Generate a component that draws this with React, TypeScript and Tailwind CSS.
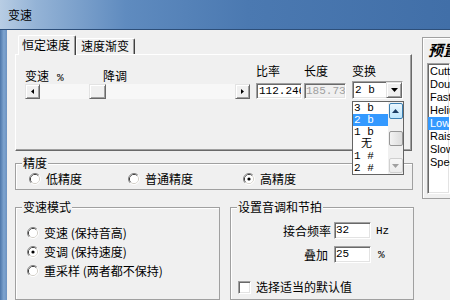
import React from 'react';

const sunken =
  'border border-t-[#a0a0a0] border-l-[#a0a0a0] border-r-white border-b-white shadow-[inset_1px_1px_0_#696969,inset_-1px_-1px_0_#e3e3e3]';
const raised =
  'border border-t-[#e3e3e3] border-l-[#e3e3e3] border-r-[#696969] border-b-[#696969] shadow-[inset_1px_1px_0_#fff,inset_-1px_-1px_0_#a0a0a0] bg-[#f0f0f0]';
const mono = "font-['Liberation_Mono','Noto_Sans_CJK_SC',monospace]";

type Dir = 'left' | 'right' | 'up' | 'down';

const Arrow: React.FC<{ dir: Dir; color?: string }> = ({ dir, color = '#000' }) => {
  if (dir === 'left')
    return (
      <svg width="3" height="5" viewBox="0 0 3 5">
        <polygon points="3,0 0,2.5 3,5" fill={color} />
      </svg>
    );
  if (dir === 'right')
    return (
      <svg width="3" height="5" viewBox="0 0 3 5">
        <polygon points="0,0 3,2.5 0,5" fill={color} />
      </svg>
    );
  if (dir === 'up')
    return (
      <svg width="7" height="4" viewBox="0 0 7 4">
        <polygon points="0,4 3.5,0 7,4" fill={color} />
      </svg>
    );
  return (
    <svg width="7" height="4" viewBox="0 0 7 4">
      <polygon points="0,0 7,0 3.5,4" fill={color} />
    </svg>
  );
};

const Radio: React.FC<{ checked?: boolean }> = ({ checked }) => (
  <svg width="12" height="12" viewBox="0 0 12 12" className="shrink-0">
    <path d="M2.11 9.89 A5.5 5.5 0 0 1 9.89 2.11" stroke="#808080" fill="none" />
    <path d="M9.89 2.11 A5.5 5.5 0 0 1 2.11 9.89" stroke="#ffffff" fill="none" />
    <path d="M2.82 9.18 A4.5 4.5 0 0 1 9.18 2.82" stroke="#404040" fill="none" />
    <path d="M9.18 2.82 A4.5 4.5 0 0 1 2.82 9.18" stroke="#d4d0c8" fill="none" />
    <circle cx="6" cy="6" r="4" fill="#fff" />
    {checked && <circle cx="6" cy="6" r="1.6" fill="#000" />}
  </svg>
);

const RadioItem: React.FC<{ label: string; checked?: boolean; className?: string }> = ({
  label,
  checked,
  className = '',
}) => (
  <div className={`flex items-center ${className}`}>
    <Radio checked={checked} />
    <span className="ml-[5px] whitespace-nowrap">{label}</span>
  </div>
);

const presets = ['Cutter', 'Double', 'Faster', 'Helium', 'Lower', 'Raise', 'Slower', 'Speed'];

const SpeedTab: React.FC = () => (
  <div className="flex items-start pl-[9px]">
    {/* scroll slider */}
    <div className="w-[225px] mt-[14px]">
      <div className="flex h-[14px]">
        <span className="w-[78px] whitespace-nowrap">
          变速<span className={`${mono} text-[11px] ml-[8px]`}>%</span>
        </span>
        <span>降调</span>
      </div>
      <div className="mt-[1px] flex h-[15px]">
        <div className={`${raised} w-[15px] flex items-center justify-center`}>
          <Arrow dir="left" />
        </div>
        <div className="flex-1 bg-[#f7f7f7] flex">
          <div className={`${raised} ml-[49px] w-[17px]`} />
        </div>
        <div className={`${raised} w-[15px] flex items-center justify-center`}>
          <Arrow dir="right" />
        </div>
      </div>
    </div>

    <div className="ml-[6px] w-[46px] mt-[9px]">
      <div>比率</div>
      <div className={`${sunken} mt-[5px] h-[16px] bg-white overflow-hidden pl-[2px] ${mono} text-[11px] leading-[14px] whitespace-nowrap`}>
        112.246
      </div>
    </div>

    <div className="ml-[2px] w-[42px] mt-[9px]">
      <div>长度</div>
      <div className={`${sunken} mt-[5px] h-[16px] bg-[#f0f0f0] overflow-hidden pl-[1px] ${mono} text-[11px] leading-[14px] text-[#a0a0a0] whitespace-nowrap`}>
        185.73
      </div>
    </div>

    <div className="ml-[6px] w-[51px] mt-[9px]">
      <div>变换</div>
      <div className={`${sunken} relative mt-[3px] h-[18px] bg-white flex`}>
        <span className={`${mono} text-[11px] leading-[16px] pl-[2px] flex-1`}>2 b</span>
        <div className={`${raised} w-[16px] flex items-center justify-center`}>
          <Arrow dir="down" />
        </div>
        {/* open dropdown list */}
        <div className="absolute left-[-1px] top-[19px] w-[52px] h-[74px] z-20 bg-white border border-[#646464] flex">
          <div className={`${mono} text-[11px] leading-[12px] flex-1`}>
            <div className="h-[12px] pl-[1px]">3 b</div>
            <div className="h-[12px] pl-[1px] bg-[#3399ff] text-white">2 b</div>
            <div className="h-[12px] pl-[1px]">1 b</div>
            <div className="h-[12px] pl-[8px]">无</div>
            <div className="h-[12px] pl-[1px]">1 #</div>
            <div className="h-[12px] pl-[1px]">2 #</div>
          </div>
          <div className="w-[15px] bg-[#f0f0f0] flex flex-col items-center pt-[1px]">
            <div className="w-[14px] h-[16px] rounded-[2px] border border-[#3c7fb1] bg-[linear-gradient(#eaf6fd,#bee6fd)] flex items-center justify-center">
              <Arrow dir="up" color="#1c3d64" />
            </div>
            <div className="mt-[12px] w-[14px] h-[15px] rounded-[2px] border border-[#979797] bg-[linear-gradient(90deg,#f3f3f3,#dcdcdc)]" />
            <div className="mt-[12px] w-[14px] h-[15px] rounded-[2px] border border-[#d0d0d0] bg-[linear-gradient(#f7f7f7,#ececec)] flex items-center justify-center">
              <Arrow dir="down" color="#a0a0a0" />
            </div>
          </div>
        </div>
      </div>
    </div>
  </div>
);

const Group: React.FC<{ title: string; className?: string; children: React.ReactNode }> = ({
  title,
  className = '',
  children,
}) => (
  <fieldset className={`border border-[#a0a0a0] shadow-[inset_1px_1px_0_#fff] ${className}`}>
    <legend className="ml-[6px] px-[1px] bg-[#f0f0f0] leading-[14px]">{title}</legend>
    {children}
  </fieldset>
);

export default function App() {
  return (
    <div className="w-[450px] h-[300px] overflow-hidden flex flex-col bg-[#f0f0f0] font-['Noto_Sans_CJK_SC',sans-serif] text-[12px] leading-[14px] text-black">
      {/* title bar */}
      <div className="h-[30px] shrink-0 flex items-center pl-[8px] border-b border-[#2d4f7a] bg-[linear-gradient(90deg,#b8cde4_0%,#94b3d6_8%,#5f8bbf_28%,#4b79b1_55%,#416fa8_100%)]">
        <span>变速</span>
      </div>

      <div className="flex flex-1 min-h-0">
        <div className="w-[7px] shrink-0 bg-[linear-gradient(90deg,#4d76a9,#7ea4cf_55%,#6c92c1)]" />

        <div className="flex flex-1 min-w-0">
          {/* left column */}
          <div className="w-[407px] shrink-0 pl-[8px] flex flex-col">
            {/* tabs */}
            <div className="mt-[5px] flex items-end h-[19px]">
              <div className="relative z-10 ml-[3px] w-[58px] h-[20px] -mb-[1px] rounded-t-[2px] bg-[#f0f0f0] border-l border-t border-r border-l-white border-t-white border-r-[#404040] shadow-[inset_-1px_0_0_#a0a0a0] pl-[3px] pt-[2px] whitespace-nowrap">
                恒定速度
              </div>
              <div className="w-[59px] h-[16px] rounded-t-[2px] bg-[#f0f0f0] border-l border-t border-r border-l-white border-t-white border-r-[#404040] shadow-[inset_-1px_0_0_#a0a0a0] pl-[4px] whitespace-nowrap">
                速度渐变
              </div>
            </div>
            <div className="w-[397px] h-[104px] border border-t-white border-l-white border-r-[#696969] border-b-[#696969] shadow-[inset_-1px_-1px_0_#a0a0a0]">
              <SpeedTab />
            </div>

            {/* precision */}
            <Group title="精度" className="mt-[5px] w-[398px] h-[36px]">
              <div className="flex items-center h-[14px] mt-[2px]">
                <RadioItem label="低精度" className="ml-[13px] w-[99px]" />
                <RadioItem label="普通精度" className="w-[115px]" />
                <RadioItem label="高精度" checked />
              </div>
            </Group>

            {/* bottom groups */}
            <div className="mt-[10px] flex">
              <Group title="变速模式" className="w-[205px] h-[100px]">
                <div className="pt-[9px] pl-[11px]">
                  <RadioItem label="变速 (保持音高)" className="h-[19px]" />
                  <RadioItem label="变调 (保持速度)" checked className="h-[19px]" />
                  <RadioItem label="重采样 (两者都不保持)" className="h-[19px]" />
                </div>
              </Group>

              <Group title="设置音调和节拍" className="ml-[10px] w-[184px] h-[100px]">
                <div className="mt-[8px] flex items-center h-[17px]">
                  <span className="w-[100px] text-right">接合频率</span>
                  <div className={`${sunken} ml-[3px] w-[37px] h-[17px] bg-white pl-[1px] ${mono} text-[11px] leading-[15px]`}>32</div>
                  <span className={`${mono} text-[11px] ml-[5px]`}>Hz</span>
                </div>
                <div className="mt-[7px] flex items-center h-[17px]">
                  <span className="w-[97px] text-right">叠加</span>
                  <div className={`${sunken} ml-[6px] w-[37px] h-[17px] bg-white pl-[1px] ${mono} text-[11px] leading-[15px]`}>25</div>
                  <span className={`${mono} text-[11px] ml-[7px]`}>%</span>
                </div>
                <div className="mt-[17px] flex items-center pl-[7px]">
                  <div className={`${sunken} w-[13px] h-[13px] bg-white shrink-0`} />
                  <span className="ml-[5px] whitespace-nowrap">选择适当的默认值</span>
                </div>
              </Group>
            </div>
          </div>

          {/* presets panel */}
          <div className="ml-[8px] mt-[7px] h-[162px] flex-1 border-l border-t border-b border-[#a0a0a0] shadow-[inset_1px_1px_0_#fff] overflow-hidden">
            <div className="pl-[5px] pt-[4px] text-[15px] leading-[16px] font-bold italic whitespace-nowrap">预置</div>
            <div className={`${sunken} ml-[4px] mt-[5px] h-[131px] bg-white pt-[1px] font-['Liberation_Sans',sans-serif] text-[11px] leading-[13px]`}>
              {presets.map((p) => (
                <div
                  key={p}
                  className={`h-[13px] pl-[2px] whitespace-nowrap ${p === 'Lower' ? 'bg-[#3399ff] text-white' : ''}`}
                >
                  {p}
                </div>
              ))}
            </div>
          </div>
        </div>
      </div>
    </div>
  );
}
